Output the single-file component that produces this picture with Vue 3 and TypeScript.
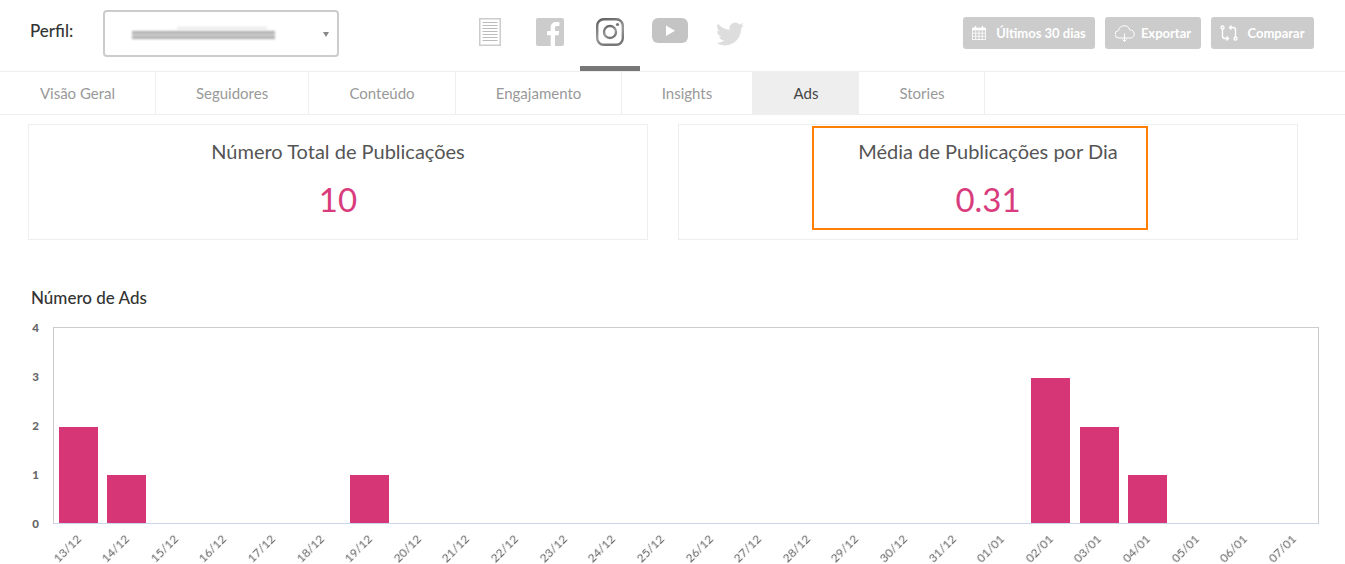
<template>
  <div class="page">
    <header class="topbar">
      <label class="profile-label">Perfil:</label>
      <div class="profile-select">
        <span class="blurred-name"></span>
        <span class="caret"></span>
      </div>

      <nav class="networks">
        <a v-for="net in networks" :key="net" class="network" :class="{ active: net === 'instagram' }">
          <svg v-if="net === 'report'" width="22" height="28" viewBox="0 0 22 28">
            <rect x="0.75" y="0.75" width="20.500" height="26.500" fill="#fff" stroke="#ccc" stroke-width="1.500" />
            <path d="M3.500 4.500h15M3.500 7.500h15M3.500 10.500h15M3.500 13.500h15M3.500 16.500h15M3.500 19.500h15M3.500 22.500h15" stroke="#bbb" stroke-width="1" />
          </svg>
          <svg v-else-if="net === 'facebook'" width="28" height="28" viewBox="0 0 28 28">
            <path fill="#ccc" d="M2 0h24a2 2 0 0 1 2 2v24a2 2 0 0 1-2 2h-7V17.200h3.600l.6-4.300H19V10.200c0-1.250.35-2.100 2.150-2.100h2.250V4.250c-.4-.05-1.700-.17-3.250-.17-3.250 0-5.450 2-5.450 5.600v3.200H11v4.300h3.700V28H2a2 2 0 0 1-2-2V2a2 2 0 0 1 2-2z" />
          </svg>
          <svg v-else-if="net === 'instagram'" width="28" height="28" viewBox="0 0 28 28">
            <defs>
              <linearGradient id="ig-stroke" x1="0" y1="0" x2="0.4" y2="1">
                <stop offset="0" stop-color="#5f5f5f" />
                <stop offset="0.65" stop-color="#9a9a9a" />
                <stop offset="1" stop-color="#777" />
              </linearGradient>
            </defs>
            <rect x="1.200" y="1.200" width="25.600" height="25.600" rx="6.500" fill="none" stroke="url(#ig-stroke)" stroke-width="2.400" />
            <circle cx="14" cy="14" r="6" fill="none" stroke="url(#ig-stroke)" stroke-width="2.400" />
            <circle cx="21.500" cy="6.500" r="1.600" fill="#777" />
          </svg>
          <svg v-else-if="net === 'youtube'" class="youtube" width="36" height="25" viewBox="0 0 36 25">
            <rect width="36" height="25" rx="6" fill="#c4c4c4" />
            <path d="M14 7.500v10.500l9-5.250z" fill="#fff" />
          </svg>
          <svg v-else class="twitter" width="28" height="24" viewBox="0 0 24 20">
            <path fill="#ddd" d="M23.953 2.570a10 10 0 0 1-2.825.775 4.958 4.958 0 0 0 2.163-2.723c-.951.555-2.005.959-3.127 1.184a4.920 4.920 0 0 0-8.384 4.482C7.690 6.095 4.067 4.130 1.640 1.162a4.822 4.822 0 0 0-.666 2.475c0 1.710.870 3.213 2.188 4.096a4.904 4.904 0 0 1-2.228-.616v.060a4.923 4.923 0 0 0 3.946 4.827 4.996 4.996 0 0 1-2.212.085 4.936 4.936 0 0 0 4.604 3.417 9.867 9.867 0 0 1-6.102 2.105c-.390 0-.779-.023-1.170-.067a13.995 13.995 0 0 0 7.557 2.209c9.053 0 13.998-7.496 13.998-13.985 0-.210 0-.420-.015-.630A9.935 9.935 0 0 0 24 2.590z" />
          </svg>
        </a>
      </nav>

      <div class="actions">
        <button class="action range">
          <svg width="14" height="14" viewBox="0 0 14 14" fill="none" stroke="#fff" stroke-width="0.800">
            <rect x="0.500" y="2" width="13" height="11.500" />
            <path d="M.5 3.200h13" stroke-width="2.400" />
            <path d="M.5 7.200h13M.5 10.200h13M3.700 4.500v9M7 4.500v9M10.300 4.500v9" />
            <path d="M3.500 0v2.500M10.500 0v2.500" stroke-width="1.400" />
          </svg>
          Últimos 30 dias
        </button>
        <button class="action export">
          <svg width="20" height="18" viewBox="0 0 20 18" fill="none" stroke="#fff" stroke-width="1">
            <path d="M5 14H4a3.700 3.700 0 0 1-.5-7.400A5.800 5.800 0 0 1 14.800 6a4 4 0 0 1 .7 8z" />
            <path d="M9.500 9.500v8M7.500 15.500l2 2 2-2" />
          </svg>
          Exportar
        </button>
        <button class="action compare">
          <svg width="18" height="18" viewBox="0 0 18 18" fill="none" stroke="#fff" stroke-width="1.400">
            <circle cx="2.500" cy="3.500" r="1.500" />
            <circle cx="15.500" cy="14.500" r="1.500" />
            <path d="M2.500 5v7c0 1.500 1 2.500 2.500 2.500h3M6.500 12.500l2 2-2 2" />
            <path d="M15.500 13V6c0-1.500-1-2.500-2.500-2.500h-3M11.500 1.500l-2 2 2 2" />
          </svg>
          Comparar
        </button>
      </div>
    </header>

    <nav class="tabs">
      <a v-for="tab in tabs" :key="tab.name" class="tab" :class="{ active: tab.name === 'Ads' }" :style="{ width: tab.width + 'px' }">
        {{ tab.name }}
      </a>
    </nav>

    <section class="cards">
      <div class="card">
        <h3>Número Total de Publicações</h3>
        <p>10</p>
      </div>
      <div class="card">
        <span class="highlight"></span>
        <h3>Média de Publicações por Dia</h3>
        <p>0.31</p>
      </div>
    </section>

    <section class="chart">
      <h4>Número de Ads</h4>
      <div class="chart-body">
        <div class="y-axis">
          <span v-for="tick in [4, 3, 2, 1, 0]" :key="tick">{{ tick }}</span>
        </div>
        <div class="chart-main">
          <div class="plot">
            <div v-for="day in days" :key="day.label" class="slot">
              <div v-if="day.value" class="bar" :style="{ height: Math.round(day.value * 48.2) + 'px' }"></div>
            </div>
          </div>
          <div class="x-axis">
            <div v-for="day in days" :key="day.label" class="x-slot">
              <span>{{ day.label }}</span>
            </div>
          </div>
        </div>
      </div>
    </section>
  </div>
</template>

<script setup lang="ts">
interface Day {
  label: string
  value: number
}

const networks = ['report', 'facebook', 'instagram', 'youtube', 'twitter']

const tabs = [
  { name: 'Visão Geral', width: 156 },
  { name: 'Seguidores', width: 153 },
  { name: 'Conteúdo', width: 147 },
  { name: 'Engajamento', width: 166 },
  { name: 'Insights', width: 131 },
  { name: 'Ads', width: 107 },
  { name: 'Stories', width: 125 }
]

const values: Record<string, number> = {
  '13/12': 2,
  '14/12': 1,
  '19/12': 1,
  '02/01': 3,
  '03/01': 2,
  '04/01': 1
}

const days: Day[] = []
for (let d = 13; d <= 31; d++) {
  const label = `${d}/12`
  days.push({ label, value: values[label] || 0 })
}
for (let d = 1; d <= 7; d++) {
  const label = `0${d}/01`
  days.push({ label, value: values[label] || 0 })
}
</script>

<style>
html,
body {
  margin: 0;
  background: #fff;
  overflow: hidden;
}
</style>

<style scoped>
.page {
  width: 1345px;
  height: 564px;
  overflow: hidden;
  font-family: Lato, "Open Sans", sans-serif;
  color: #444;
}

.topbar {
  display: flex;
  align-items: flex-start;
  height: 71px;
  box-sizing: border-box;
  padding-left: 30px;
}

.profile-label {
  width: 73px;
  margin-top: 20px;
  font-size: 17px;
  line-height: 22px;
  font-weight: 500;
  color: #333;
}

.profile-select {
  position: relative;
  width: 236px;
  height: 47px;
  margin-top: 10px;
  box-sizing: border-box;
  border: 2px solid #ccc;
  border-radius: 4px;
}

.blurred-name {
  position: absolute;
  left: 27px;
  top: 19px;
  width: 143px;
  height: 8px;
  background: linear-gradient(#aaa 0 25%, #c8c8c8 25% 70%, #aaa 70% 100%);
  filter: blur(1.3px);
}

.blurred-name::before {
  content: "";
  position: absolute;
  left: 45px;
  top: -4px;
  width: 90px;
  height: 2px;
  background: #e6e6e6;
}

.caret {
  position: absolute;
  right: 8px;
  top: 20px;
  border-left: 3px solid transparent;
  border-right: 3px solid transparent;
  border-top: 5px solid #888;
}

.networks {
  display: flex;
  margin-left: 121px;
  height: 71px;
}

.network {
  width: 60px;
  height: 71px;
  box-sizing: border-box;
  padding-top: 18px;
  display: flex;
  justify-content: center;
  align-items: flex-start;
}

.network.active {
  border-bottom: 5px solid #777;
}

.twitter {
  margin-top: 4px;
}

.actions {
  display: flex;
  gap: 10px;
  margin-top: 17px;
  margin-left: auto;
  margin-right: 31px;
}

.action {
  display: flex;
  align-items: center;
  justify-content: center;
  height: 32px;
  padding: 0;
  border: 0;
  border-radius: 3px;
  background: #ccc;
  color: #fff;
  font-family: inherit;
  font-size: 13px;
  font-weight: 700;
}

.range {
  width: 132px;
  gap: 10px;
}

.export {
  width: 96px;
  gap: 6px;
}

.compare {
  width: 103px;
  gap: 9px;
}

.tabs {
  display: flex;
  height: 44px;
  box-sizing: border-box;
  border-top: 1px solid #eee;
  border-bottom: 1px solid #eee;
}

.tab {
  box-sizing: border-box;
  display: flex;
  align-items: center;
  justify-content: center;
  border-right: 1px solid #eee;
  font-size: 15px;
  color: #999;
}

.tab.active {
  background: #eee;
  color: #444;
  border-right-color: #fff;
}

.cards {
  display: flex;
  gap: 30px;
  margin: 9px 0 0 28px;
}

.card {
  position: relative;
  width: 620px;
  height: 116px;
  box-sizing: border-box;
  border: 1px solid #eee;
  text-align: center;
}

.card h3 {
  margin: 13px 0 0;
  font-size: 20px;
  line-height: 26px;
  font-weight: 400;
  color: #555;
}

.card p {
  margin: 14px 0 0;
  font-size: 33px;
  line-height: 42px;
  color: #d93c7c;
}

.highlight {
  position: absolute;
  left: 133px;
  top: 1px;
  width: 336px;
  height: 104px;
  box-sizing: border-box;
  border: 2px solid #ff8000;
}

.chart {
  margin: 48px 0 0 31px;
}

.chart h4 {
  margin: 0;
  font-size: 17px;
  line-height: 20px;
  font-weight: 500;
  color: #333;
}

.chart-body {
  display: flex;
  margin-top: 19px;
}

.y-axis {
  width: 8px;
  height: 196px;
  display: flex;
  flex-direction: column;
  justify-content: space-between;
  align-items: flex-end;
  font-size: 11.5px;
  font-weight: 900;
  color: #666;
}

.y-axis span {
  height: 0;
  line-height: 2px;
}

.chart-main {
  width: 1266px;
  margin-left: 14px;
}

.plot {
  display: grid;
  grid-template-columns: repeat(26, 1fr);
  height: 197px;
  box-sizing: border-box;
  border: 1px solid #ccc;
  border-bottom-color: #ccd6eb;
}

.slot {
  display: flex;
  align-items: flex-end;
  justify-content: center;
}

.bar {
  width: 39px;
  background: #d63576;
}

.x-axis {
  display: grid;
  grid-template-columns: repeat(26, 1fr);
  padding: 0 1px;
}

.x-slot {
  position: relative;
  height: 40px;
}

.x-slot span {
  position: absolute;
  right: calc(50% + 4.5px);
  top: 8px;
  white-space: nowrap;
  font-size: 12px;
  line-height: 14px;
  color: #666;
  transform: rotate(-45deg);
  transform-origin: right top;
  will-change: transform;
}
</style>
